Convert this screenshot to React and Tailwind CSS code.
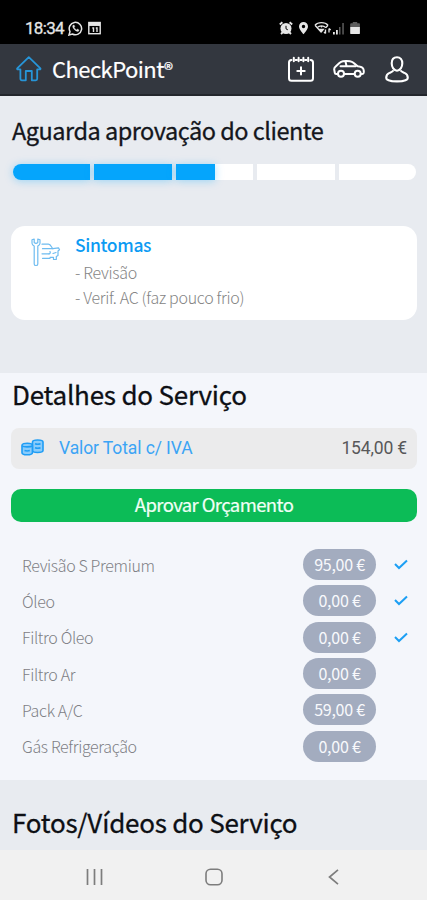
const services = [
    { name: "Revisão S Premium", price: "95,00 €", done: true },
    { name: "Óleo", price: "0,00 €", done: true },
    { name: "Filtro Óleo", price: "0,00 €", done: true },
    { name: "Filtro Ar", price: "0,00 €", done: false },
    { name: "Pack A/C", price: "59,00 €", done: false },
    { name: "Gás Refrigeração", price: "0,00 €", done: false },
];

// fill percentage of every step
const steps = [100, 100, 50, 0, 0];

function StatusBar() {
    return (
        <div className="h-[44px] bg-black flex items-center pt-[12px] pl-[25px] pr-[67px] text-[#e6e6e6]">
            <span className="font-[Roboto] text-[17px] leading-[20px] tracking-[-0.7px] w-[43px] [-webkit-text-stroke:0.3px]">18:34</span>
            <svg width="15" height="15" viewBox="0 0 15 15" fill="none" stroke="currentColor" strokeWidth="1.5">
                <path d="M1 14l1-3.400A6.200 6.200 0 1 1 4.400 13z" />
                <path d="M5 4.300c-.8 1 0 3 1.500 4.400s3.200 2.200 4.200 1.400l.3-1.100-1.700-.9-.9.800C7.300 8.400 6.500 7.500 6.100 6.600l.7-.8-.7-1.700z" fill="currentColor" strokeWidth="0.4" />
            </svg>
            <svg className="ml-[5px]" width="13" height="14" viewBox="0 0 13 14" fill="none" stroke="currentColor" strokeWidth="1.4">
                <rect x="0.8" y="1.5" width="11.4" height="11.2" />
                <path d="M1 3.200h11" strokeWidth="3.5" />
                <path d="M4.300 7h1.200v4M7.800 7H9v4" />
            </svg>
            <div className="ml-auto flex items-center">
                <svg width="14" height="14" viewBox="0 0 14 14" fill="none" stroke="currentColor" strokeWidth="1.9">
                    <circle cx="7" cy="7.500" r="5.500" fill="currentColor" stroke="none" />
                    <path d="M.8 3.400L3.400 1.200M13.200 3.400l-2.600-2.200M2 13l2-2M12 13l-2-2" />
                    <path d="M7 4.800v3l1.800 1" stroke="#000" strokeWidth="1" />
                </svg>
                <svg className="ml-[5px]" width="11" height="14" viewBox="0 0 10 14" fill="currentColor">
                    <path fillRule="evenodd" d="M5 1a4.500 4.500 0 0 0-4.500 4.500C.5 8.500 5 13.300 5 13.300s4.500-4.800 4.500-7.800A4.500 4.500 0 0 0 5 1zm0 2.800a1.700 1.700 0 1 1 0 3.400 1.700 1.700 0 0 1 0-3.400z" />
                </svg>
                <svg className="ml-[5px]" width="18" height="14" viewBox="0 0 18 14" fill="none" stroke="currentColor" strokeWidth="1.3">
                    <path d="M1 4.200C4 .8 11 .8 14 4.200M3.200 6.600c2.300-2.300 6.300-2.300 8.600 0M1 4.200l6.300 7M7.500 4.500v2M14 4.200l-2.300 2.500" />
                    <path d="M5.800 8.500h3.500L7.500 10.800z" fill="currentColor" />
                    <path d="M11.500 8.500v4M10 11l1.500 1.500M15 11.500v-4M16.700 9L15 7.500" />
                </svg>
                <svg width="13" height="13" viewBox="0 0 13 13" fill="currentColor">
                    <path d="M1 10h1.800v2.500H1zM4 8h1.800v4.500H4z" />
                    <path d="M7 5h1.500v7.500H7zM10.300 1h1.500v11.500h-1.500z" opacity="0.4" />
                </svg>
                <svg className="ml-[5px]" width="10" height="14" viewBox="0 0 10 14" fill="currentColor">
                    <path d="M2.800 1h4.400v1.200h1.700c.6 0 1 .4 1 .9V6H.2V3.100c0-.5.4-.9 1-.9h1.600z" opacity="0.4" />
                    <path d="M.2 6h9.700v6.200c0 .5-.4.9-1 .9H1.200c-.6 0-1-.4-1-.9z" />
                </svg>
            </div>
        </div>
    );
}

function Header() {
    return (
        <div className="h-[52px] bg-[#33373f] border-b-2 border-[#23262c] flex items-center pl-[16px] pr-[18px] text-white">
            <svg width="26" height="26" viewBox="0 0 26 26" fill="none" stroke="#2795d8" strokeWidth="1.8" strokeLinejoin="round" strokeLinecap="round">
                <path d="M1.200 12.400L12.800 1.200 24.400 12.400c.3.700-.1 1-.7 1h-2.500v9.400c0 1-.6 1.500-1.500 1.500h-3.900v-9.300H9.800v9.300H5.900c-.9 0-1.500-.5-1.500-1.500v-9.400H1.900c-.6 0-1-.3-.7-1z" />
            </svg>
            <h1 className="ml-[10px] text-[22px] leading-[30px] font-normal tracking-[-0.55px] whitespace-nowrap [-webkit-text-stroke:0.2px]">
                CheckPoint<span className="text-[19px] relative -top-[1px]">®</span>
            </h1>
            <div className="ml-auto flex items-center">
                <svg width="26" height="27" viewBox="0 0 26 27" fill="none" stroke="currentColor" strokeWidth="2" strokeLinecap="round">
                    <path d="M3.500 4C2 4 1 5 1 6.500v15.700c0 1.500 1 2.500 2.500 2.500h19c1.500 0 2.500-1 2.500-2.500V6.500C25 5 24 4 22.500 4M7.500 4h1.500M12.300 4h1.500M17 4h1.500" />
                    <path d="M5.800 1.800v3.400M10.600 1.800v3.400M15.400 1.800v3.400M20.200 1.800v3.400M13 11.200v7.400M9.300 14.900h7.400" />
                </svg>
                <svg className="ml-[19px]" width="32" height="18" viewBox="0 0 32 18" fill="none" stroke="currentColor" strokeWidth="2" strokeLinejoin="round" strokeLinecap="round">
                    <path d="M4.500 14H3.100c-.7 0-1.200-.5-1.300-1.200L1.200 9.500c-.1-1.200.3-2 1.200-2.800l4-3.700c1-.9 2-1.500 3.500-1.700 2-.3 5-.3 7 0 1.500.2 2.700.8 3.900 1.800l3.900 3.100c3 .3 5 1.300 5.600 2.600.5 1.200.6 2.900.3 4.100-.2.700-.8 1.100-1.500 1.100h-.6M11.500 14h9.500" />
                    <path d="M7.500 6.200h15.300M12.500 1.500l1 4.500" />
                    <circle cx="8" cy="13.800" r="3" />
                    <circle cx="24.700" cy="13.800" r="3" />
                </svg>
                <svg className="ml-[20px]" width="24" height="27" viewBox="0 0 24 27" fill="none" stroke="currentColor" strokeWidth="2.1" strokeLinejoin="round">
                    <path d="M12 1.200c-3.300 0-5.300 2.400-5.300 6.100 0 3.900 2.200 7.400 5.300 7.400s5.300-3.500 5.300-7.400c0-3.700-2-6.100-5.300-6.100z" />
                    <path d="M8.500 14.300c-.4 1.300-2 1.800-4 2.600-2.200.9-3.300 2.500-3.300 5.100 0 2 4.800 3.400 10.800 3.400s10.800-1.400 10.800-3.400c0-2.600-1.100-4.200-3.300-5.100-2-.8-3.600-1.300-4-2.600" />
                </svg>
            </div>
        </div>
    );
}

function Progress() {
    return (
        <div className="mt-[17px] ml-[2px] mr-[1px] flex gap-[4px] h-[16px]">
            {steps.map((fill, i) => (
                <div key={i} className={`flex-1 bg-white ${i === 0 ? "rounded-l-full" : ""} ${i === 4 ? "rounded-r-full" : ""}`}>
                    {fill > 0 && (
                        <div
                            className={`h-full bg-[#05a5fc] shadow-[0_1px_9px_rgba(5,165,252,0.35)] ${i === 0 ? "rounded-l-full" : ""}`}
                            style={{ width: `${fill}%` }}
                        />
                    )}
                </div>
            ))}
        </div>
    );
}

function Symptoms() {
    return (
        <div className="mt-[46px] h-[94px] bg-white rounded-[14px] flex">
            <svg className="ml-[20px] mt-[12px] shrink-0" width="30" height="29" viewBox="0 0 30 29" fill="none" stroke="#6fbcf0" strokeWidth="1.2" strokeLinejoin="round" strokeLinecap="round">
                <path d="M1 1.800v3.500c0 1.300 1 2.200 2.200 2.800v17.800c0 1 .8 1.600 1.800 1.600s1.800-.6 1.800-1.600V8.100C8 7.500 9 6.600 9 5.300V1.800L6.800 1v3.600L5 5.500l-1.800-.9V1z" />
                <path d="M11 6.200h6.500c2 0 3 2.800 4.300 4.500H11.500M11 15.800h7M11.500 20.300h7.500" />
                <path d="M21.800 10.700l5.700-.9 1 2-1.500 1.200v4.500l-1.700 1v3h-2.800v-2.200H19M18 15.800c1.200 0 1.500-1.400 1-2.200M22 15.500l3-1" />
            </svg>
            <div className="ml-[14px] pt-[6px]">
                <h3 className="text-[17.5px] leading-[26px] font-medium tracking-[-0.35px] text-[#0d9bf3]">Sintomas</h3>
                <p className="mt-[2px] text-[16px] leading-[25px] font-light tracking-[-0.3px] text-[#858585]">- Revisão</p>
                <p className="text-[16px] leading-[25px] font-light tracking-[-0.3px] text-[#858585]">- Verif. AC (faz pouco frio)</p>
            </div>
        </div>
    );
}

function CoinsIcon() {
    return (
        <svg className="-mt-[3px]" width="23" height="17" viewBox="0 0 23 17" fill="#8accfb" stroke="#1f9df5" strokeWidth="1.6" strokeLinejoin="round">
            <path d="M11.500 3v8.500c0 1.200 2.200 2 5 2s5.500-.8 5.500-2V3c0-1.200-2.500-2-5.300-2s-5.200.8-5.200 2z" />
            <path d="M14 4.800c1.500.5 4 .5 5.500 0M14 8.800c1.500.5 4 .5 5.500 0" />
            <path d="M1 6.200v7.600c0 1.200 2.200 2 5 2s5.400-.8 5.400-2V6.200c0-1.200-2.500-2-5.200-2S1 5 1 6.200z" />
            <path d="M1 7c1.500 1.200 8.500 1.200 10.400 0M3.500 11.500c1.500.5 3.800.5 5.300 0" />
        </svg>
    );
}

function ServiceRow({ name, price, done }) {
    return (
        <div className="h-[36.3px] flex items-center">
            <span className="flex-1 text-[16px] leading-[24px] font-light tracking-[-0.35px] text-[#7e8085]">{name}</span>
            <span className="w-[73px] h-[31px] rounded-full bg-[#a3acbf] text-[#f8f9fc] text-[16px] leading-[31px] tracking-[-0.25px] text-center whitespace-nowrap">{price}</span>
            <span className="w-[51px] pr-[2px] flex justify-center">
                {done && (
                    <svg width="14" height="11" viewBox="0 0 14 11" fill="none" stroke="#1c9ff4" strokeWidth="2">
                        <path d="M1 5l4 4 8-7.500" />
                    </svg>
                )}
            </span>
        </div>
    );
}

function NavBar() {
    return (
        <div className="h-[50px] pt-[3px] bg-[#f1f1f1] grid grid-cols-[187px_53px_187px] items-center text-[#7d7d7d]">
            <svg className="ml-[86px]" width="17" height="16" viewBox="0 0 17 16" stroke="currentColor" strokeWidth="1.7">
                <path d="M1.500 0v16M8.500 0v16M15.500 0v16" />
            </svg>
            <svg className="mx-auto" width="18" height="18" viewBox="0 0 18 18" fill="none" stroke="currentColor" strokeWidth="1.6">
                <rect x="1" y="1.300" width="16" height="15.400" rx="4.500" />
            </svg>
            <svg className="ml-[88px]" width="11" height="16" viewBox="0 0 11 16" fill="none" stroke="currentColor" strokeWidth="1.7">
                <path d="M10 .8L1.500 8l8.500 7.200" />
            </svg>
        </div>
    );
}

export default function App() {
    return (
        <div className="w-[427px] h-[900px] overflow-hidden flex flex-col font-['Noto_Sans_CJK_SC',sans-serif]">
            <StatusBar />
            <Header />
            <section className="h-[277px] bg-[#e8ebf0] pl-[11px] pr-[10px] pt-[17px]">
                <h2 className="pl-[1px] text-[23.5px] leading-[34px] font-normal tracking-[-0.5px] text-[#14161c] [-webkit-text-stroke:0.3px]">Aguarda aprovação do cliente</h2>
                <Progress />
                <Symptoms />
            </section>
            <section className="h-[407px] bg-[#f4f6fb] pl-[11px] pr-[10px] pt-[3px]">
                <h2 className="pl-[1px] text-[26px] leading-[36px] font-normal tracking-[-0.22px] text-[#0d0f14] [-webkit-text-stroke:0.3px]">Detalhes do Serviço</h2>
                <div className="mt-[16px] h-[41px] rounded-[8px] bg-[#ebebec] flex items-center px-[10px] font-[Roboto]">
                    <CoinsIcon />
                    <span className="ml-[15px] text-[17.5px] tracking-[-0.1px] text-[#3ba4f5]">Valor Total c/ IVA</span>
                    <span className="ml-auto text-[17.5px] tracking-[-0.15px] text-[#58585a]">154,00 €</span>
                </div>
                <button className="mt-[20px] flex justify-center w-full h-[33px] rounded-[10px] bg-[#0cbc57] text-[18.5px] leading-[31px] tracking-[-0.6px] text-[#f0fff6] [-webkit-text-stroke:0.2px]">
                    Aprovar Orçamento
                </button>
                <div className="mt-[24.5px] pl-[11px] -mr-[10px]">
                    {services.map((s) => (
                        <ServiceRow key={s.name} {...s} />
                    ))}
                </div>
            </section>
            <section className="h-[70px] bg-[#e8ebf0] px-[11px] pt-[24px]">
                <h2 className="pl-[1px] text-[26px] leading-[36px] font-normal tracking-[-0.25px] text-[#0d0f14] [-webkit-text-stroke:0.3px]">Fotos/Vídeos do Serviço</h2>
            </section>
            <NavBar />
        </div>
    );
}
